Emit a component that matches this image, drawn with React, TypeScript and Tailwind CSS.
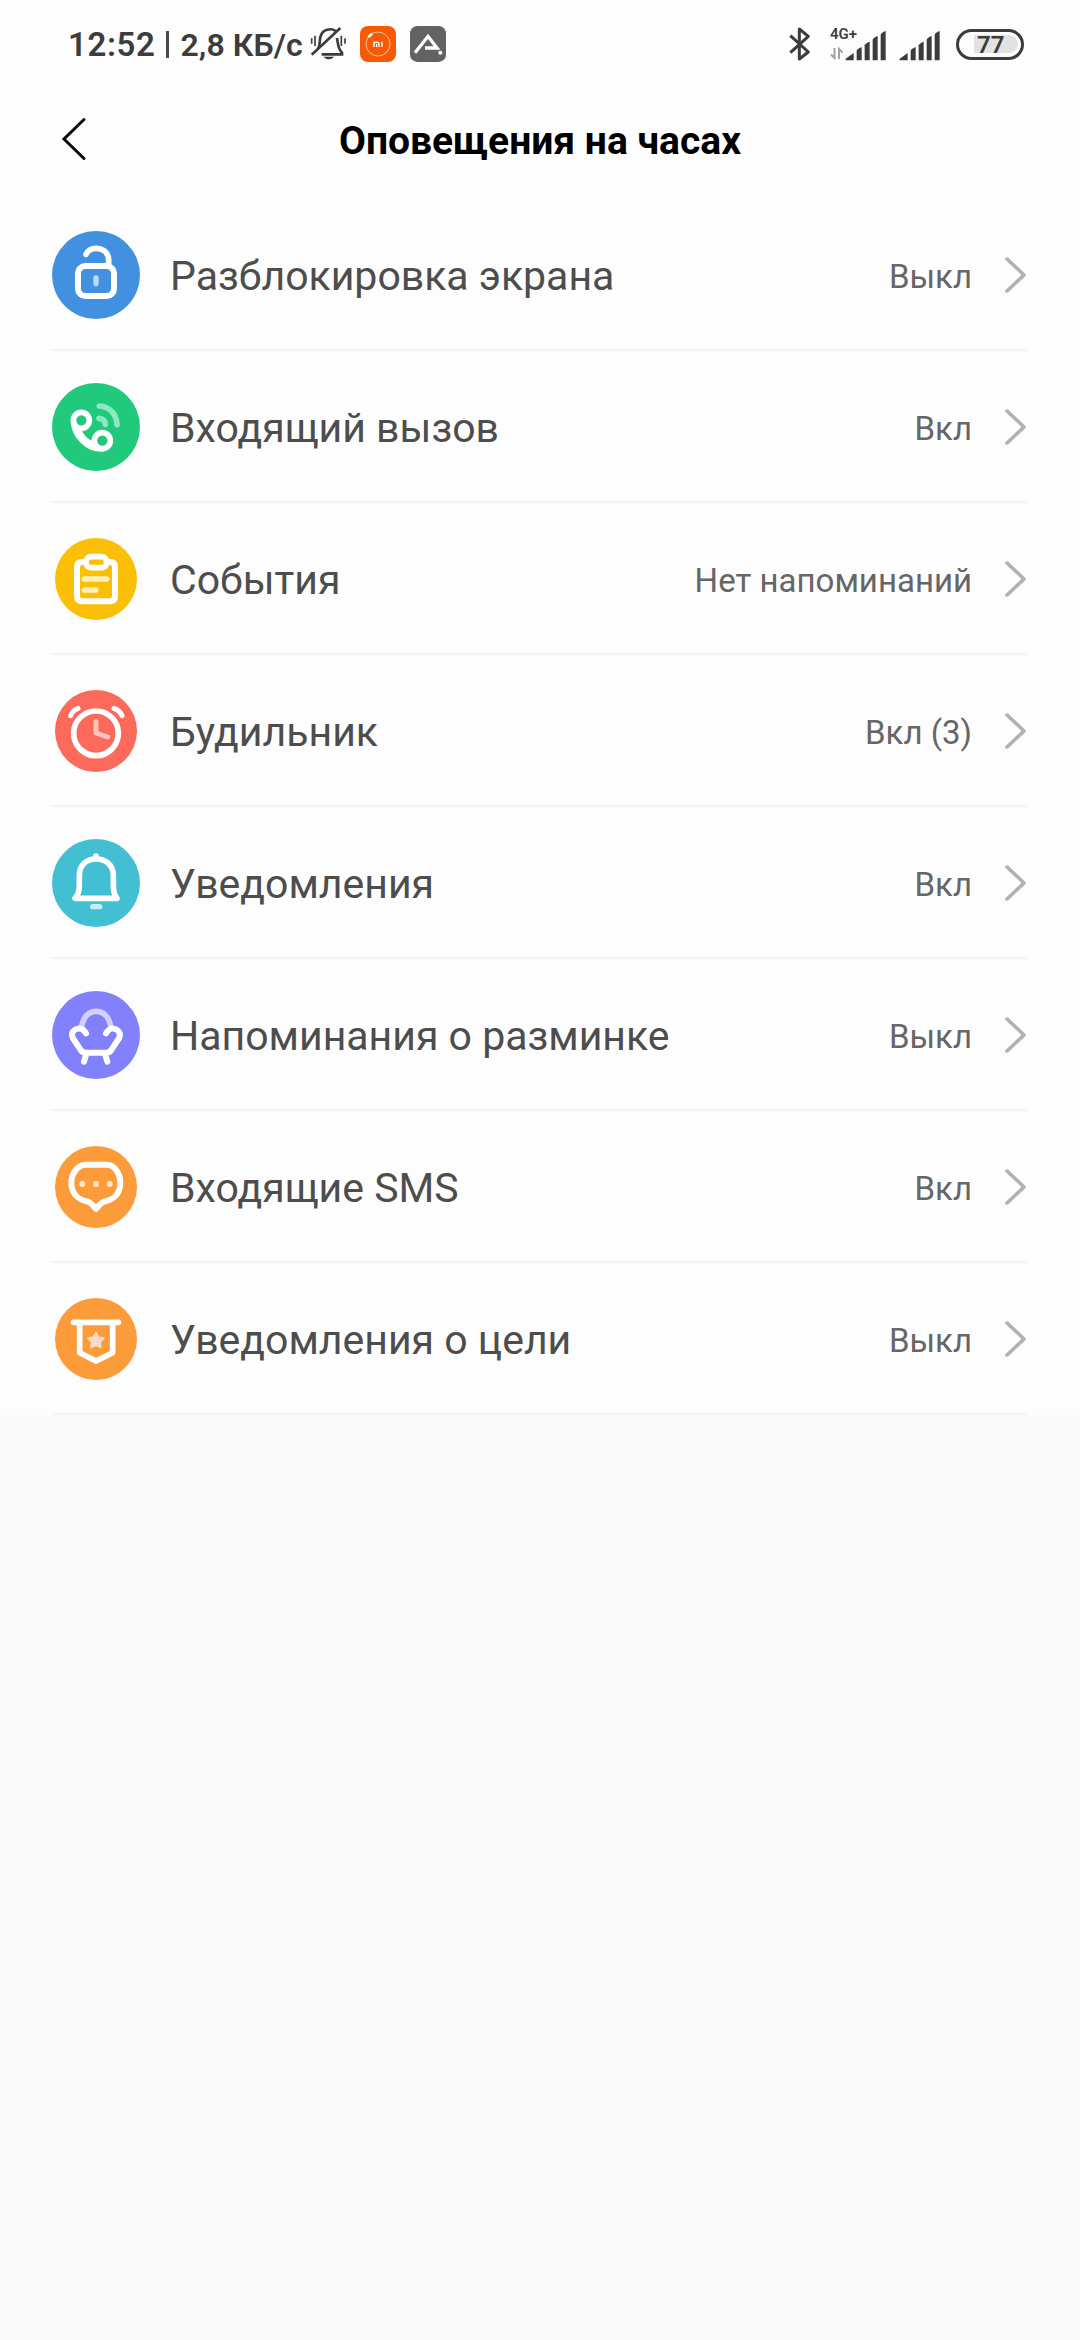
import type { ReactNode } from "react";

interface AlertItem {
  label: string;
  value: string;
  icon: ReactNode;
}

const items: AlertItem[] = [
  { label: "Разблокировка экрана", value: "Выкл", icon: <UnlockIcon /> },
  { label: "Входящий вызов", value: "Вкл", icon: <CallIcon /> },
  { label: "События", value: "Нет напоминаний", icon: <EventsIcon /> },
  { label: "Будильник", value: "Вкл (3)", icon: <AlarmIcon /> },
  { label: "Уведомления", value: "Вкл", icon: <BellIcon /> },
  { label: "Напоминания о разминке", value: "Выкл", icon: <ChairIcon /> },
  { label: "Входящие SMS", value: "Вкл", icon: <SmsIcon /> },
  { label: "Уведомления о цели", value: "Выкл", icon: <GoalIcon /> },
];

export default function App() {
  return (
    <div className="min-h-[2340px] w-[1080px] bg-[#fafafa] font-['Roboto',sans-serif]">
      <div className="bg-[#fdfdfd]">
        <StatusBar />
        <Header />
        <ul>
          {items.map((item) => (
            <AlertRow key={item.label} item={item} />
          ))}
        </ul>
      </div>
    </div>
  );
}

function StatusBar() {
  return (
    <div className="flex h-[88px] items-center justify-between pl-[68px] pr-[56px] text-[#3c3c3c]">
      <div className="flex items-center">
        <span className="whitespace-pre pt-[2px] text-[33px] font-semibold tracking-[0.6px]">
          12:52
        </span>
        <span className="ml-[11px] h-[27px] w-[3px] bg-[#4a4a4a]" />
        <span className="ml-[11px] whitespace-pre pt-[2px] text-[32px] font-semibold tracking-[0.1px]">
          2,8 КБ/с
        </span>
        <MutedBellIcon />
        <MiIcon />
        <AppIcon />
      </div>
      <div className="flex items-center">
        <BluetoothIcon />
        <div className="ml-[19px] flex h-[34px] items-end">
          <div className="flex flex-col">
            <span className="-mr-3 text-[15px] font-semibold leading-[15px]">4G+</span>
            <DataArrows />
          </div>
          <SignalBars />
        </div>
        <div className="ml-[12px] flex h-[34px] items-end">
          <SignalBars />
        </div>
        <Battery level={77} />
      </div>
    </div>
  );
}

function Header() {
  return (
    <header className="flex h-[111px] items-start px-[56px] pt-[23px]">
      <button type="button" aria-label="Назад" className="h-[56px] w-[40px]">
        <svg width="40" height="56" viewBox="0 0 40 56" fill="none">
          <path d="M28 8.500L8 28L28 47.500" stroke="#0a0a0a" strokeWidth="3" strokeLinecap="round" />
        </svg>
      </button>
      <h1 className="flex-1 pr-[40px] pt-[2px] text-center text-[39px] font-bold leading-[56px] text-black">
        Оповещения на часах
      </h1>
    </header>
  );
}

function AlertRow({ item }: { item: AlertItem }) {
  return (
    <li>
      <div className="flex h-[150px] items-center pl-[40px] pr-[49px] pt-[2px]">
        {item.icon}
        <span className="ml-[20px] flex-1 pt-[4px] text-[41px] text-[#4d4d4d]">{item.label}</span>
        <span className="pt-[4px] text-[33px] text-[#666666]">{item.value}</span>
        <svg className="ml-[28px]" width="31" height="44" viewBox="0 0 31 44" fill="none">
          <path d="M7 6L24 22L7 38" stroke="#b0b0b0" strokeWidth="3.500" strokeLinecap="round" strokeLinejoin="round" />
        </svg>
      </div>
      <div className="ml-[52px] mr-[53px] h-[2px] bg-[#f4f4f4]" />
    </li>
  );
}

interface RoundIconProps {
  color: string;
  small?: boolean;
  children: ReactNode;
}

function RoundIcon({ color, small, children }: RoundIconProps) {
  return (
    <svg
      width="110"
      height="110"
      viewBox="0 0 330 330"
      fill="none"
      stroke="#fff"
      strokeLinecap="round"
      strokeLinejoin="round"
    >
      <circle cx="168" cy="165" r={small ? 123 : 132} fill={color} stroke="none" />
      {children}
    </svg>
  );
}

function UnlockIcon() {
  return (
    <RoundIcon color="#4290e0">
      <rect x="114" y="138" width="108" height="90" rx="22" strokeWidth="18" />
      <path d="M138 103C144 90 155 85 168 85C189 85 206 98 206 120V138" strokeWidth="17" />
      <path d="M168 174V191" stroke="#b8dcfa" strokeWidth="16" />
    </RoundIcon>
  );
}

function CallIcon() {
  return (
    <RoundIcon color="#21c97d">
      <circle cx="124" cy="145" r="24" strokeWidth="17" />
      <circle cx="187" cy="206" r="24" strokeWidth="17" />
      <path d="M101 150C103 190 140 231 185 231" strokeWidth="17" />
      <path d="M116 170C124 190 142 209 163 216" strokeWidth="12" />
      <path d="M178 102C210 104 230 127 231 158" stroke="#90e8c0" strokeWidth="17" />
      <path d="M177 139C189 140 195 146 196 157" stroke="#90e8c0" strokeWidth="17" />
    </RoundIcon>
  );
}

function EventsIcon() {
  return (
    <RoundIcon color="#fcbf08" small>
      <path d="M136 114H126Q111 114 111 129V216Q111 232 126 232H210Q225 232 225 216V129Q225 114 210 114H200" strokeWidth="18" />
      <rect x="138" y="98" width="62" height="33" rx="15" strokeWidth="17" />
      <path d="M133 165H200M133 198H167" stroke="#ffefb8" strokeWidth="17" />
    </RoundIcon>
  );
}

function AlarmIcon() {
  return (
    <RoundIcon color="#fb6a5a" small>
      <circle cx="168" cy="172" r="67" strokeWidth="17" />
      <path d="M168 137V171L203 183" stroke="#ffc4bd" strokeWidth="15" />
      <path d="M92 119C96 107 103 101 114 97M222 97C233 101 242 108 246 119" strokeWidth="15" />
    </RoundIcon>
  );
}

function BellIcon() {
  return (
    <RoundIcon color="#42bfd2">
      <path d="M168 84V93M105 211H231C223 202 220 188 220 172V142C220 112 198 93 168 93C138 93 118 112 118 142V172C118 188 115 201 105 211Z" strokeWidth="17" />
      <path d="M158 236H179" stroke="#c5f0f5" strokeWidth="16" />
    </RoundIcon>
  );
}

function ChairIcon() {
  return (
    <RoundIcon color="#8280fb">
      <path d="M125 138C132 107 148 94 168 94C188 94 206 107 212 138" stroke="#d0d0ff" strokeWidth="17" />
      <path d="M138 160C130 145 116 142 105 149C95 156 94 165 99 175L121 208Q126 218 137 218H199Q210 218 215 208L237 175C242 165 240 156 230 149C219 142 206 145 198 160M139 221L132 245M195 221L202 245" strokeWidth="18" />
    </RoundIcon>
  );
}

function SmsIcon() {
  return (
    <RoundIcon color="#fc9b3a" small>
      <path d="M137 98H200C224 98 241 126 241 152C241 184 221 204 191 209Q182 213 168 231Q154 213 145 209C115 204 94 184 94 152C94 126 112 98 137 98Z" strokeWidth="18" />
      <g fill="#ffe3c4" stroke="none">
        <circle cx="127" cy="156" r="9" />
        <circle cx="168" cy="156" r="9" />
        <circle cx="209" cy="156" r="9" />
      </g>
    </RoundIcon>
  );
}

function GoalIcon() {
  return (
    <RoundIcon color="#fc9b3a" small>
      <path d="M101 115H235" strokeWidth="17" />
      <path d="M119 117V206L168 231L218 206V117" strokeWidth="17" />
      <path
        d="M168 146L175 160L191 163L180 174L182 190L168 183L153 190L156 174L144 163L160 160Z"
        fill="#f8dcc8"
        stroke="#f8dcc8"
        strokeWidth="6"
      />
    </RoundIcon>
  );
}

function MutedBellIcon() {
  return (
    <svg className="ml-[6px]" width="38" height="36" viewBox="0 0 114 108" fill="none" stroke="#3c3c3c" strokeWidth="8">
      <path d="M27 68C35 57 30 43 35 30C41 10 66 5 80 15M84 36C88 57 86 67 99 80V85H38" />
      <path d="M8 86L94 6" />
      <path d="M43 92H76Q60 108 43 92Z" fill="#3c3c3c" stroke="none" />
      <path d="M18 29V60M8 37V53M97 29V60M108 37V53" strokeWidth="5" />
    </svg>
  );
}

function MiIcon() {
  return (
    <svg className="ml-[13px]" width="36" height="36" viewBox="0 0 108 108" fill="none">
      <rect width="108" height="108" rx="24" fill="#f65a05" />
      <circle cx="54" cy="54" r="36" stroke="#ffc59b" strokeWidth="3" />
      <path d="M25 33L36 23" stroke="#fff" strokeWidth="8" />
      <path d="M42 63V49H53Q57 49 57 54V63M50 54V63M66 47V63" stroke="#fff" strokeWidth="4" />
    </svg>
  );
}

function AppIcon() {
  return (
    <svg className="ml-[14px]" width="36" height="36" viewBox="0 0 108 108" fill="none">
      <rect width="108" height="108" rx="22" fill="#626262" />
      <path d="M15 80L54 31L81 66H45" stroke="#fff" strokeWidth="10" />
      <circle cx="91" cy="80" r="6" fill="#fff" />
    </svg>
  );
}

function BluetoothIcon() {
  return (
    <svg width="22" height="36" viewBox="0 0 66 108" fill="none">
      <path d="M4 29L58 78L31 99V9L58 31L4 80" stroke="#3c3c3c" strokeWidth="9" strokeLinejoin="round" />
    </svg>
  );
}

function DataArrows() {
  return (
    <svg className="mt-[4px]" width="14" height="15" viewBox="0 0 14 15" fill="none">
      <path d="M4.500 2V12L1 8.500M9 13V3L12.500 6.500" stroke="#a0a0a0" strokeWidth="2" />
    </svg>
  );
}

function SignalBars() {
  return (
    <svg width="42" height="30" viewBox="0 0 126 90" fill="#3c3c3c">
      <path d="M2 88V83L26 66V88Z" />
      <path d="M35 88V58Q37 53 50 48V88Z" />
      <path d="M59 88V43Q61 37 74 32V88Z" />
      <path d="M83 88V26Q85 20 98 15V88Z" />
      <path d="M107 88V11Q109 5 122 0V88Z" />
    </svg>
  );
}

function Battery({ level }: { level: number }) {
  return (
    <div className="ml-[15px] flex h-[31px] w-[68px] items-center rounded-full border-[3px] border-[#3c3c3c] pl-[15px]">
      <div className="flex h-[18px] w-[44px] items-center rounded-r-[9px] bg-[#e2e2e2] pl-[3px] pt-[2px]">
        <span className="text-[24px] font-semibold leading-[18px]">{level}</span>
      </div>
    </div>
  );
}
